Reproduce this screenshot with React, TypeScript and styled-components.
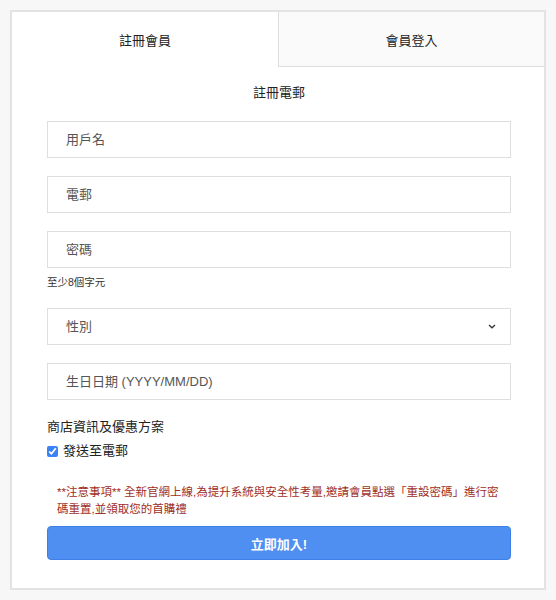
import React from "react";
import styled, { createGlobalStyle } from "styled-components";

const Global = createGlobalStyle`
  html, body {
    margin: 0;
    padding: 0;
    background: #f7f7f7;
  }
  body {
    padding: 10px;
    font-family: "Liberation Sans", "Noto Sans CJK TC", sans-serif;
    color: #333;
  }
  * { box-sizing: border-box; }
`;

const Card = styled.div`
  width: 536px;
  background: #fff;
  border: 2px solid #e3e3e3;
  display: flex;
  flex-direction: column;
`;

const Tabs = styled.div`
  display: grid;
  grid-template-columns: 1fr 1fr;
  height: 55px;
`;

const Tab = styled.div<{ $active?: boolean }>`
  display: flex;
  align-items: center;
  justify-content: center;
  font-size: 13px;
  color: #222;
  background: ${(p) => (p.$active ? "#fff" : "#fafafa")};
  border-left: ${(p) => (p.$active ? "none" : "1px solid #dedede")};
  border-bottom: ${(p) => (p.$active ? "none" : "1px solid #dedede")};
`;

const Form = styled.form`
  display: flex;
  flex-direction: column;
  padding: 0 33px 28px 35px;
`;

const Title = styled.div`
  margin-top: 17px;
  font-size: 13px;
  line-height: 18px;
  text-align: center;
  color: #222;
`;

const Field = styled.input<{ $mt?: number }>`
  height: 37px;
  width: 100%;
  margin-top: ${(p) => p.$mt ?? 18}px;
  border: 1px solid #dedede;
  border-radius: 0;
  padding: 0 0 0 18px;
  font-family: inherit;
  font-size: 13px;
  color: #333;
  background: #fff;
  outline: none;
  &::placeholder {
    color: #555;
  }
`;

const Hint = styled.div`
  margin-top: 7px;
  font-size: 10.5px;
  line-height: 14px;
  color: #333;
`;

const SelectBox = styled.div`
  height: 37px;
  margin-top: 19px;
  border: 1px solid #dedede;
  display: flex;
  align-items: center;
  padding: 0 14px 0 18px;
`;

const Select = styled.select`
  flex: 1;
  appearance: none;
  -webkit-appearance: none;
  border: none;
  outline: none;
  background: transparent;
  padding: 0;
  font-family: inherit;
  font-size: 13px;
  color: #555;
`;

const SectionLabel = styled.div`
  margin-top: 18px;
  font-size: 13px;
  line-height: 18px;
  color: #222;
`;

const CheckRow = styled.label`
  margin-top: 6px;
  display: flex;
  align-items: center;
  gap: 5px;
  font-size: 13px;
  line-height: 18px;
  color: #222;
`;

const Check = styled.input`
  width: 11px;
  height: 11px;
  margin: 0;
  accent-color: #3b82f6;
`;

const Note = styled.p`
  margin: 24px 0 0;
  padding: 0 9px 0 10px;
  font-size: 11.5px;
  line-height: 17px;
  color: #9e2d27;
`;

const Submit = styled.button`
  margin-top: 8px;
  height: 34px;
  width: 100%;
  border: 1px solid #3f80e8;
  border-radius: 4px;
  background: #4f8ff1;
  color: #fff;
  font-family: inherit;
  font-size: 13px;
  font-weight: bold;
  cursor: pointer;
`;

const Chevron = () => (
  <svg width="8" height="5" viewBox="0 0 8 5" fill="none">
    <path d="M1 1 L4 3.8 L7 1" stroke="#333" strokeWidth="1.3" />
  </svg>
);

export default function App() {
  return (
    <>
      <Global />
      <Card>
        <Tabs>
          <Tab $active>註冊會員</Tab>
          <Tab>會員登入</Tab>
        </Tabs>
        <Form onSubmit={(e) => e.preventDefault()}>
          <Title>註冊電郵</Title>
          <Field $mt={19} placeholder="用戶名" />
          <Field placeholder="電郵" />
          <Field type="password" placeholder="密碼" />
          <Hint>至少8個字元</Hint>
          <SelectBox>
            <Select defaultValue="">
              <option value="" disabled>
                性別
              </option>
              <option value="m">男</option>
              <option value="f">女</option>
            </Select>
            <Chevron />
          </SelectBox>
          <Field placeholder="生日日期 (YYYY/MM/DD)" />
          <SectionLabel>商店資訊及優惠方案</SectionLabel>
          <CheckRow>
            <Check type="checkbox" defaultChecked />
            發送至電郵
          </CheckRow>
          <Note>
            **注意事項** 全新官網上線,為提升系統與安全性考量,邀請會員點選「重設密碼」進行密碼重置,並領取您的首購禮
          </Note>
          <Submit type="submit">立即加入!</Submit>
        </Form>
      </Card>
    </>
  );
}
